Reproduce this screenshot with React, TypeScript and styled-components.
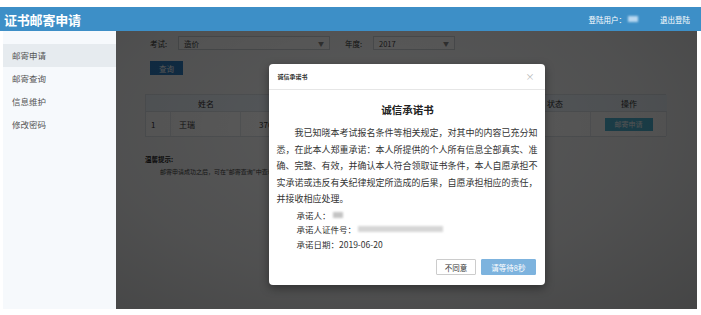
import React from "react";
import styled, { createGlobalStyle } from "styled-components";

const GlobalStyle = createGlobalStyle`
  html, body {
    margin: 0;
    padding: 0;
    background: #ffffff;
  }
  body {
    font-family: "Noto Sans CJK SC", "Noto Sans", "Liberation Sans", sans-serif;
    color: #333333;
  }
`;

const Page = styled.div`
  width: 701px;
  height: 315px;
  padding-top: 7px;
  box-sizing: border-box;
`;

const Header = styled.header`
  height: 24px;
  background: #3d8fc7;
  display: flex;
  align-items: center;
  justify-content: space-between;
  padding: 0 11px 0 4px;
  color: #ffffff;
`;

const Title = styled.h1`
  margin: 0;
  font-size: 13px;
  font-weight: bold;
  letter-spacing: -0.2px;
`;

const UserBar = styled.div`
  display: flex;
  align-items: center;
  font-size: 7.5px;
`;

const Blur = styled.span<{ $w: number; $color: string }>`
  display: inline-block;
  width: ${(p) => p.$w}px;
  height: 6px;
  margin: 0 2px;
  background: ${(p) => p.$color};
  filter: blur(1.2px);
  vertical-align: middle;
`;

const Logout = styled.span`
  margin-left: 20px;
`;

const Body = styled.div`
  display: flex;
  height: 278px;
  margin: 0 4px 0 3px;
`;

const Sidebar = styled.aside`
  width: 113px;
  background: #f6f9fc;
  padding-top: 13px;
`;

const MenuItem = styled.div<{ $active?: boolean }>`
  height: 23px;
  line-height: 23px;
  padding-left: 9px;
  font-size: 8.5px;
  color: #555555;
  background: ${(p) => (p.$active ? "#e6ebef" : "transparent")};
`;

const Main = styled.main`
  flex: 1;
  position: relative;
  background: #f7f8f9;
  padding: 5px 31px 0 29px;
  overflow: hidden;
`;

const FilterRow = styled.div`
  display: flex;
  align-items: center;
  height: 14px;
  padding-left: 5px;
  font-size: 7.5px;
`;

const Label = styled.span`
  width: 28px;
`;

const Select = styled.div<{ $w: number }>`
  width: ${(p) => p.$w}px;
  height: 14px;
  box-sizing: border-box;
  border: 1px solid #cfd4d8;
  background: #ffffff;
  display: flex;
  align-items: center;
  justify-content: space-between;
  padding: 0 5px;
  margin-right: 15px;
  font-size: 7.5px;
  color: #444;
`;

const Caret = styled.span`
  font-size: 6px;
  color: #888;
`;

const QueryButton = styled.div`
  width: 33px;
  height: 14px;
  margin: 11px 0 0 5px;
  background: #2f7fc4;
  color: #ffffff;
  font-size: 7.5px;
  display: flex;
  align-items: center;
  justify-content: center;
`;

const Table = styled.div`
  margin-top: 19px;
  width: 521px;
  display: grid;
  grid-template-columns: 25px 70px 300px 50px 76px;
  border: 1px solid #dde3e8;
  box-sizing: border-box;
  font-size: 8px;
`;

const HeadCell = styled.div<{ $center?: boolean }>`
  height: 16px;
  background: #eef6fd;
  display: flex;
  align-items: center;
  justify-content: ${(p) => (p.$center ? "center" : "flex-start")};
  padding-left: ${(p) => (p.$center ? 0 : 6)}px;
`;

const Cell = styled.div<{ $pad?: number; $center?: boolean }>`
  height: 24px;
  display: flex;
  align-items: center;
  justify-content: ${(p) => (p.$center ? "center" : "flex-start")};
  padding-left: ${(p) => p.$pad ?? 0}px;
  border-top: 1px solid #dde3e8;
  border-right: 1px solid #e6eaee;
  background: #ffffff;
`;

const ApplyButton = styled.div`
  width: 48px;
  height: 13px;
  background: #4fb6d6;
  color: #ffffff;
  font-size: 7px;
  display: flex;
  align-items: center;
  justify-content: center;
`;

const TipTitle = styled.div`
  margin-top: 17px;
  font-size: 6.5px;
  font-weight: bold;
  color: #222;
`;

const TipText = styled.div`
  margin-top: 3px;
  padding-left: 15px;
  font-size: 6px;
  color: #444;
`;

const Overlay = styled.div`
  position: absolute;
  inset: 0;
  background: radial-gradient(
    ellipse at 45% 35%,
    rgba(0, 0, 0, 0.64) 0%,
    rgba(0, 0, 0, 0.68) 60%,
    rgba(0, 0, 0, 0.72) 100%
  );
  display: flex;
  justify-content: center;
  align-items: flex-start;
  padding-top: 33px;
`;

const Modal = styled.div`
  width: 276px;
  height: 221px;
  background: #ffffff;
  border-radius: 4px;
  box-shadow: 0 3px 10px rgba(0, 0, 0, 0.4);
  display: flex;
  flex-direction: column;
`;

const ModalHeader = styled.div`
  height: 26px;
  box-sizing: border-box;
  border-bottom: 1px solid #e6e6e6;
  display: flex;
  align-items: center;
  justify-content: space-between;
  padding: 0 10px 0 9px;
  font-size: 6px;
  font-weight: bold;
  color: #333;
`;

const Close = styled.span`
  font-size: 9px;
  font-weight: normal;
  color: #b5b5b5;
`;

const ModalBody = styled.div`
  padding: 0 6px 0 8px;
  flex: 1;
  display: flex;
  flex-direction: column;
`;

const DocTitle = styled.div`
  margin-top: 13px;
  line-height: 13px;
  text-align: center;
  font-size: 10.5px;
  font-weight: bold;
  color: #222;
`;

const Paragraph = styled.p`
  margin: 9px 0 0;
  width: 262px;
  font-size: 9px;
  line-height: 16.5px;
  text-indent: 18px;
  color: #333;
`;

const SignLine = styled.div`
  padding-left: 20px;
  font-size: 8.5px;
  line-height: 14.5px;
  color: #333;
  display: flex;
  align-items: center;
`;

const Actions = styled.div`
  margin-top: 8px;
  display: flex;
  justify-content: flex-end;
  gap: 5px;
  padding-right: 3px;
`;

const Button = styled.div<{ $primary?: boolean }>`
  height: 16px;
  padding: 0 ${(p) => (p.$primary ? 9 : 8)}px;
  box-sizing: border-box;
  display: flex;
  align-items: center;
  font-size: 7.5px;
  border: 1px solid ${(p) => (p.$primary ? "#7db3de" : "#cccccc")};
  background: ${(p) => (p.$primary ? "#7db3de" : "#ffffff")};
  color: ${(p) => (p.$primary ? "#ffffff" : "#333333")};
  border-radius: 1px;
`;

const menu = ["邮寄申请", "邮寄查询", "信息维护", "修改密码"];

export default function App() {
  return (
    <Page>
      <GlobalStyle />
      <Header>
        <Title>证书邮寄申请</Title>
        <UserBar>
          登陆用户：
          <Blur $w={10} $color="#b9d8f0" />
          <Logout>退出登陆</Logout>
        </UserBar>
      </Header>
      <Body>
        <Sidebar>
          {menu.map((m, i) => (
            <MenuItem key={m} $active={i === 0}>
              {m}
            </MenuItem>
          ))}
        </Sidebar>
        <Main>
          <FilterRow>
            <Label>考试:</Label>
            <Select $w={152}>
              造价
              <Caret>▼</Caret>
            </Select>
            <Label>年度:</Label>
            <Select $w={82}>
              2017
              <Caret>▼</Caret>
            </Select>
          </FilterRow>
          <QueryButton>查询</QueryButton>
          <Table>
            <HeadCell />
            <HeadCell $center>姓名</HeadCell>
            <HeadCell $center>证件号码</HeadCell>
            <HeadCell>状态</HeadCell>
            <HeadCell $center>操作</HeadCell>
            <Cell $pad={5}>1</Cell>
            <Cell $pad={8}>王瑞</Cell>
            <Cell $pad={18}>370</Cell>
            <Cell />
            <Cell $center>
              <ApplyButton>邮寄申请</ApplyButton>
            </Cell>
          </Table>
          <TipTitle>温馨提示:</TipTitle>
          <TipText>邮寄申请成功之后，可在"邮寄查询"中查看邮寄进度。</TipText>
          <Overlay>
            <Modal>
              <ModalHeader>
                诚信承诺书
                <Close>×</Close>
              </ModalHeader>
              <ModalBody>
                <DocTitle>诚信承诺书</DocTitle>
                <Paragraph>
                  我已知晓本考试报名条件等相关规定，对其中的内容已充分知悉，在此本人郑重承诺：本人所提供的个人所有信息全部真实、准确、完整、有效，并确认本人符合领取证书条件，本人自愿承担不实承诺或违反有关纪律规定所造成的后果，自愿承担相应的责任，并接收相应处理。
                </Paragraph>
                <SignLine>
                  承诺人：
                  <Blur $w={10} $color="#c4c4c4" />
                </SignLine>
                <SignLine>
                  承诺人证件号：
                  <Blur $w={85} $color="#d6d6d6" />
                </SignLine>
                <SignLine>承诺日期：2019-06-20</SignLine>
                <Actions>
                  <Button>不同意</Button>
                  <Button $primary>请等待8秒</Button>
                </Actions>
              </ModalBody>
            </Modal>
          </Overlay>
        </Main>
      </Body>
    </Page>
  );
}
